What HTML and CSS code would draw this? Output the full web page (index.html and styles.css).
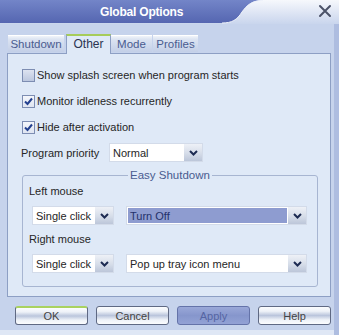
FILE: index.html
```html
<!DOCTYPE html>
<html>
<head>
<meta charset="utf-8">
<link rel="stylesheet" href="styles.css">
</head>
<body>
<div class="window">
  <div class="titlebar">
    <svg class="title-bg" width="339" height="24" viewBox="0 0 339 24">
      <defs>
        <linearGradient id="dk" x1="0" y1="0" x2="0" y2="1">
          <stop offset="0" stop-color="#7385c8"/>
          <stop offset="1" stop-color="#5566b1"/>
        </linearGradient>
        <linearGradient id="lt" x1="0" y1="0" x2="0" y2="1">
          <stop offset="0" stop-color="#f6f8fc"/>
          <stop offset="1" stop-color="#c9d5ed"/>
        </linearGradient>
      </defs>
      <rect x="0" y="0" width="339" height="24" fill="url(#lt)"/>
      <path d="M0,0 H263 C252,0 247,5 242,12 C237,20 232,23 222,23 H0 Z" fill="url(#dk)"/>
      <path d="M263,0.5 C252,0.5 247,5 242,12 C237,20 232,23 222,23" fill="none" stroke="#eef2fa" stroke-width="1"/>
    </svg>
    <div class="title-text">Global Options</div>
    <svg class="close" width="14" height="14" viewBox="0 0 14 14">
      <path d="M2,2 L12,12 M12,2 L2,12" stroke="#4b5268" stroke-width="2" stroke-linecap="round"/>
    </svg>
  </div>
  <div class="body">
    <div class="tabs">
      <div class="tab t-shutdown">Shutdown</div>
      <div class="tab active t-other">Other</div>
      <div class="tab t-mode">Mode</div>
      <div class="tab t-profiles">Profiles</div>
    </div>
    <div class="panel">
      <div class="check-row"><span class="cb off"></span><span>Show splash screen when program starts</span></div>
      <div class="check-row"><span class="cb"><svg width="11" height="11" viewBox="0 0 11 11"><polyline points="2,5.5 4.5,8 9,2.5" fill="none" stroke="#23408f" stroke-width="2"/></svg></span><span>Monitor idleness recurrently</span></div>
      <div class="check-row"><span class="cb"><svg width="11" height="11" viewBox="0 0 11 11"><polyline points="2,5.5 4.5,8 9,2.5" fill="none" stroke="#23408f" stroke-width="2"/></svg></span><span>Hide after activation</span></div>
      <div class="prio-row">
        <span class="prio-label">Program priority</span>
        <div class="select w-prio"><span class="val">Normal</span><span class="arrow"><svg width="9" height="6" viewBox="0 0 9 6"><polyline points="1,1 4.5,4.5 8,1" fill="none" stroke="#1d2b52" stroke-width="2"/></svg></span></div>
      </div>
      <fieldset class="group">
        <legend>Easy Shutdown</legend>
        <div class="lbl">Left mouse</div>
        <div class="sel-row">
          <div class="select w-click"><span class="val">Single click</span><span class="arrow"><svg width="9" height="6" viewBox="0 0 9 6"><polyline points="1,1 4.5,4.5 8,1" fill="none" stroke="#1d2b52" stroke-width="2"/></svg></span></div>
          <div class="select w-action hl"><span class="val">Turn Off</span><span class="arrow"><svg width="9" height="6" viewBox="0 0 9 6"><polyline points="1,1 4.5,4.5 8,1" fill="none" stroke="#1d2b52" stroke-width="2"/></svg></span></div>
        </div>
        <div class="lbl lbl2">Right mouse</div>
        <div class="sel-row">
          <div class="select w-click"><span class="val">Single click</span><span class="arrow"><svg width="9" height="6" viewBox="0 0 9 6"><polyline points="1,1 4.5,4.5 8,1" fill="none" stroke="#1d2b52" stroke-width="2"/></svg></span></div>
          <div class="select w-action"><span class="val">Pop up tray icon menu</span><span class="arrow"><svg width="9" height="6" viewBox="0 0 9 6"><polyline points="1,1 4.5,4.5 8,1" fill="none" stroke="#1d2b52" stroke-width="2"/></svg></span></div>
        </div>
      </fieldset>
    </div>
    <div class="buttons">
      <div class="btn default">OK</div>
      <div class="btn">Cancel</div>
      <div class="btn apply">Apply</div>
      <div class="btn">Help</div>
    </div>
    <div class="bottom-strip"></div>
  </div>
</div>
</body>
</html>
```

FILE: styles.css
```css
* { box-sizing: border-box; }
html, body { margin: 0; padding: 0; }
body {
  width: 339px;
  height: 335px;
  overflow: hidden;
  font-family: "Liberation Sans", Arial, sans-serif;
  font-size: 11px;
  color: #262626;
  background: #c6d3ec;
}
.window {
  width: 339px;
  height: 335px;
  display: flex;
  flex-direction: column;
}
.titlebar {
  height: 24px;
  display: grid;
  grid-template-columns: 1fr;
  grid-template-rows: 24px;
  align-items: center;
}
.titlebar > * { grid-area: 1 / 1; }
.title-bg { display: block; }
.title-text {
  justify-self: start;
  margin-left: 100px;
  color: #ffffff;
  font-weight: bold;
  font-size: 12px;
  letter-spacing: -0.2px;
  line-height: 24px;
  margin-top: -1px;
}
.close {
  justify-self: end;
  margin-right: 7px;
  margin-top: -2px;
}
.body {
  flex: 1;
  display: flex;
  flex-direction: column;
  padding-left: 7px;
  padding-right: 3px;
  border-right: 5px solid #aebde0;
  background: #c6d3ec;
}
.tabs {
  display: flex;
  align-items: flex-end;
  height: 20px;
  margin-top: 9px;
  margin-left: 1px;
}
.tab {
  height: 17px;
  margin-bottom: 1px;
  display: flex;
  align-items: center;
  justify-content: center;
  color: #4a5c90;
  font-size: 11.5px;
  background: linear-gradient(#f1f4fa 0%, #dce4f2 20%, #c3cfe7 100%);
  border-top: 1px solid #ffffff;
}
.t-shutdown { width: 56px; }
.t-other { width: 45px; margin-left: 2px; }
.t-mode { width: 41px; }
.t-profiles { width: 45px; margin-left: 1px; }
.tab.active {
  height: 20px;
  margin-bottom: -1px;
  position: relative;
  z-index: 1;
  background: #dfe9f7;
  border: 1px solid #8d9fc4;
  border-top: 2px solid #a6cc5a;
  border-bottom: none;
  color: #2b3450;
  align-items: flex-start;
  padding-top: 1px;
  font-size: 12px;
}
.panel {
  height: 244px;
  width: 324px;
  border: 1px solid #8d9fc4;
  background: #dfe9f7;
  padding: 8px 0 0 14px;
  display: flex;
  flex-direction: column;
}
.check-row {
  height: 26px;
  display: flex;
  align-items: center;
  gap: 2px;
}
.cb {
  width: 13px;
  height: 13px;
  border: 1px solid #7d8db2;
  background: linear-gradient(#f4f6fb, #dfe5f1);
  display: flex;
  align-items: center;
  justify-content: center;
  flex: none;
}
.cb.off {
  background: linear-gradient(#dde3f0, #bcc7df);
}
.cb svg { display: block; }
.prio-row {
  margin-top: 3px;
  height: 19px;
  display: flex;
  align-items: center;
}
.prio-label {
  margin-left: -1px;
  width: 88px;
}
.select {
  height: 19px;
  display: flex;
  background: #ffffff;
  border: 1px solid #d3dbe9;
}
.select .val {
  flex: 1;
  display: flex;
  align-items: center;
  padding-left: 3px;
  white-space: nowrap;
  overflow: hidden;
}
.select .arrow {
  width: 18px;
  display: flex;
  align-items: center;
  justify-content: center;
  background: linear-gradient(#eef1f7 0%, #d6dde9 55%, #bcc6d9 100%);
}
.select .arrow svg { display: block; }
.w-prio { width: 94px; }
.w-click { width: 82px; }
.w-action { width: 181px; }
.select.hl .val {
  background: #8e9cd0;
  color: #24316b;
  border: 1px solid #ffffff;
  padding-left: 2px;
}
.group {
  margin: 7px 0 0 0;
  width: 296px;
  border: 1px solid #a7b5d1;
  border-radius: 3px;
  padding: 1px 6px 13px 6px;
  min-width: 0;
}
.group legend {
  margin: 0 auto;
  padding: 0 2px;
  line-height: 13px;
  font-size: 11.5px;
  color: #4a5c90;
}
.lbl {
  height: 16px;
  line-height: 16px;
}
.lbl2 { margin-top: 6px; }
.sel-row {
  margin-top: 7px;
  margin-left: 3px;
  display: flex;
  gap: 12px;
}
.buttons {
  margin-top: 9px;
  margin-left: 8px;
  display: flex;
  gap: 8px;
}
.btn {
  width: 73px;
  height: 19px;
  border: 1px solid #5f6983;
  border-radius: 3px;
  display: flex;
  align-items: center;
  justify-content: center;
  color: #444444;
  background: linear-gradient(#fbfcfe 0%, #eef2f8 25%, #bac5dc 50%, #eef2f8 75%, #fbfcfe 100%);
}
.btn.default {
  border-top: 2px solid #a9d260;
}
.btn.apply {
  background: linear-gradient(#9aa8d8 0%, #8696cc 50%, #93a2d5 100%);
  border-color: #6473a9;
  color: #5565a3;
}
.bottom-strip {
  margin-top: auto;
  height: 5px;
  margin-left: -7px;
  margin-right: -3px;
  background: #dfe7f5;
}
```
